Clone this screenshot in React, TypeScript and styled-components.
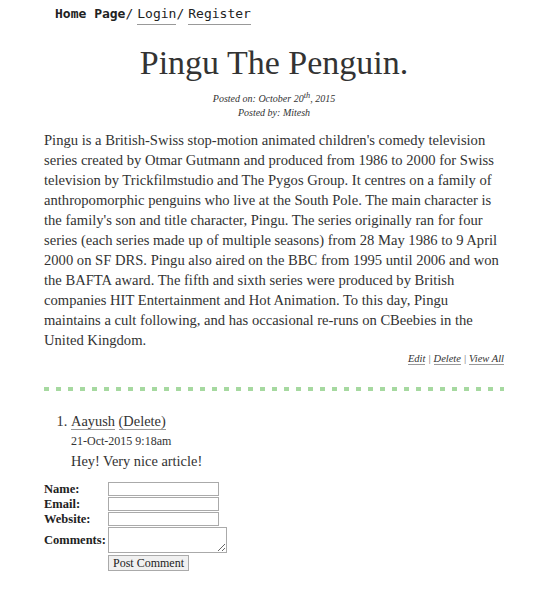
import React from "react";
import styled, { createGlobalStyle } from "styled-components";

const Global = createGlobalStyle`
  html, body { margin: 0; padding: 0; background: #fff; }
  body { font-family: "Liberation Serif", "Times New Roman", serif; color: #333; }
`;

const Page = styled.div`
  width: 460px;
  margin-left: 44px;
  display: flex;
  flex-direction: column;
`;

const Nav = styled.nav`
  display: flex;
  align-items: baseline;
  padding: 6px 0 0 11px;
  font-family: "DejaVu Sans Mono", monospace;
  font-size: 13px;
  color: #222;
`;

const NavHome = styled.span`
  font-weight: bold;
`;

const NavLink = styled.a`
  color: #222;
  text-decoration: none;
  border-bottom: 1px solid #999;
  padding-bottom: 3px;
  margin-left: 4px;
`;

const Sep = styled.span``;

const Title = styled.h1`
  margin: 19px 0 0;
  text-align: center;
  font-weight: normal;
  font-size: 34px;
  line-height: 38px;
  color: #333;
`;

const Meta = styled.div`
  margin-top: 7px;
  text-align: center;
  font-style: italic;
  font-size: 10px;
  line-height: 14px;
`;

const Body = styled.p`
  margin: 10px 0 0;
  font-size: 14.6px;
  line-height: 20px;
`;

const Actions = styled.div`
  text-align: right;
  font-style: italic;
  font-size: 10.5px;
  line-height: 13px;
  margin-top: 2px;
  color: #666;
`;

const ActionLink = styled.a`
  color: #333;
  text-decoration: none;
  border-bottom: 1px solid #999;
`;

const Divider = styled.div`
  margin-top: 22px;
  height: 4px;
  background: repeating-linear-gradient(to right, #a6d9a0 0 5px, transparent 5px 12px);
`;

const Comments = styled.ol`
  margin: 20px 0 0;
  padding-left: 27px;
  font-size: 14.4px;
  line-height: 20px;
`;

const Comment = styled.li``;

const Author = styled.a`
  color: #333;
  text-decoration: none;
  border-bottom: 1px solid #999;
`;

const DateLine = styled.div`
  font-size: 12px;
  line-height: 16px;
  margin-top: 2px;
`;

const Text = styled.div`
  margin-top: 2px;
`;

const Form = styled.form`
  margin-top: 11px;
  display: grid;
  grid-template-columns: 64px auto;
  row-gap: 1px;
  align-items: center;
  justify-items: start;
`;

const Label = styled.label`
  font-weight: bold;
  font-size: 12.5px;
  line-height: 13px;
  color: #222;
`;

const Input = styled.input`
  box-sizing: border-box;
  width: 111px;
  height: 14px;
  border: 1px solid #aaa;
  padding: 0;
  margin: 0;
`;

const Area = styled.textarea`
  box-sizing: border-box;
  width: 119px;
  height: 26px;
  border: 1px solid #aaa;
  padding: 0;
  margin: 0;
`;

const Button = styled.button`
  grid-column: 2;
  margin-top: 1px;
  font-family: "Liberation Serif", serif;
  font-size: 12px;
  line-height: 12px;
  padding: 1px 4px;
  border: 1px solid #aaa;
  background: #f0f0f0;
  color: #222;
`;

export default function App() {
  return (
    <>
      <Global />
      <Page>
        <Nav>
          <NavHome>Home Page</NavHome>
          <Sep>/</Sep>
          <NavLink>Login</NavLink>
          <Sep>/</Sep>
          <NavLink>Register</NavLink>
        </Nav>
        <Title>Pingu The Penguin.</Title>
        <Meta>
          Posted on: October 20<sup>th</sup>, 2015
          <br />
          Posted by: Mitesh
        </Meta>
        <Body>
          Pingu is a British-Swiss stop-motion animated children's comedy television series created by Otmar
          Gutmann and produced from 1986 to 2000 for Swiss television by Trickfilmstudio and The Pygos Group. It
          centres on a family of anthropomorphic penguins who live at the South Pole. The main character is the
          family's son and title character, Pingu. The series originally ran for four series (each series made up
          of multiple seasons) from 28 May 1986 to 9 April 2000 on SF DRS. Pingu also aired on the BBC from 1995
          until 2006 and won the BAFTA award. The fifth and sixth series were produced by British companies HIT
          Entertainment and Hot Animation. To this day, Pingu maintains a cult following, and has occasional
          re-runs on CBeebies in the United Kingdom.
        </Body>
        <Actions>
          <ActionLink>Edit</ActionLink> | <ActionLink>Delete</ActionLink> | <ActionLink>View All</ActionLink>
        </Actions>
        <Divider />
        <Comments>
          <Comment>
            <Author>Aayush</Author> <Author>(Delete)</Author>
            <DateLine>21-Oct-2015 9:18am</DateLine>
            <Text>Hey! Very nice article!</Text>
          </Comment>
        </Comments>
        <Form>
          <Label>Name:</Label>
          <Input />
          <Label>Email:</Label>
          <Input />
          <Label>Website:</Label>
          <Input />
          <Label>Comments:</Label>
          <Area />
          <Button type="button">Post Comment</Button>
        </Form>
      </Page>
    </>
  );
}
